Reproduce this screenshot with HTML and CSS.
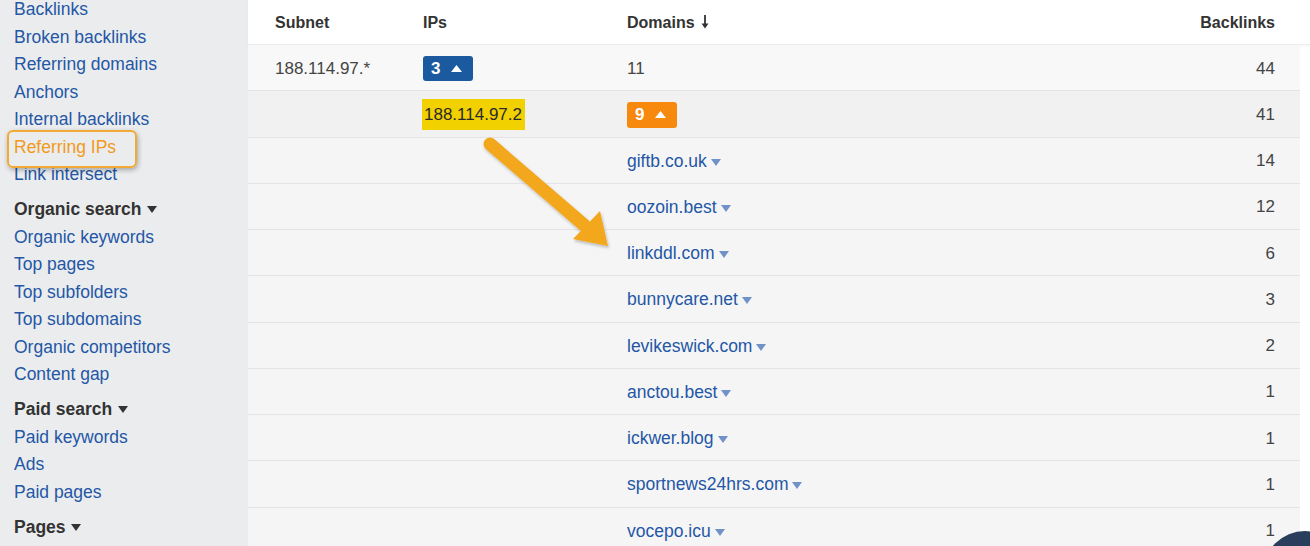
FILE: index.html
```html
<!DOCTYPE html>
<html lang="en">
<head>
  <meta charset="UTF-8">
  <title>Referring IPs</title>
  <link rel="stylesheet" href="styles.css">
</head>
<body>
  <div class="app">
    <nav class="sidebar">
      <ul class="nav">
        <li><a href="#">Backlinks</a></li>
        <li><a href="#">Broken backlinks</a></li>
        <li><a href="#">Referring domains</a></li>
        <li><a href="#">Anchors</a></li>
        <li><a href="#">Internal backlinks</a></li>
        <li class="active"><a href="#">Referring IPs</a></li>
        <li><a href="#">Link intersect</a></li>
        <li class="section">Organic search <svg class="caret dark" width="10" height="7" viewBox="0 0 10 7"><path d="M0 0h10L5 7z"/></svg></li>
        <li><a href="#">Organic keywords</a></li>
        <li><a href="#">Top pages</a></li>
        <li><a href="#">Top subfolders</a></li>
        <li><a href="#">Top subdomains</a></li>
        <li><a href="#">Organic competitors</a></li>
        <li><a href="#">Content gap</a></li>
        <li class="section">Paid search <svg class="caret dark" width="10" height="7" viewBox="0 0 10 7"><path d="M0 0h10L5 7z"/></svg></li>
        <li><a href="#">Paid keywords</a></li>
        <li><a href="#">Ads</a></li>
        <li><a href="#">Paid pages</a></li>
        <li class="section">Pages <svg class="caret dark" width="10" height="7" viewBox="0 0 10 7"><path d="M0 0h10L5 7z"/></svg></li>
      </ul>
    </nav>

    <main class="content">
      <div class="row head">
        <div>Subnet</div>
        <div>IPs</div>
        <div class="sorted">Domains
          <svg width="8" height="14" viewBox="0 0 8 14"><path d="M4 0v11" stroke="#333" stroke-width="1.8"/><path d="M0.5 8.5h7L4 13.5z" fill="#333"/></svg>
        </div>
        <div class="num">Backlinks</div>
      </div>

      <div class="row subnet">
        <div>188.114.97.*</div>
        <div><span class="badge blue">3 <svg width="11" height="7" viewBox="0 0 11 7"><path d="M0 7h11L5.5 0z" fill="#fff"/></svg></span></div>
        <div>11</div>
        <div class="num">44</div>
      </div>

      <div class="row ip">
        <div></div>
        <div><span class="mark">188.114.97.2</span></div>
        <div><span class="badge orange">9 <svg width="11" height="7" viewBox="0 0 11 7"><path d="M0 7h11L5.5 0z" fill="#fff"/></svg></span></div>
        <div class="num">41</div>
      </div>

      <div class="row"><div></div><div></div><div><a href="#">giftb.co.uk</a><svg class="caret" width="10" height="7" viewBox="0 0 10 7"><path d="M0 0h10L5 7z"/></svg></div><div class="num">14</div></div>
      <div class="row"><div></div><div></div><div><a href="#">oozoin.best</a><svg class="caret" width="10" height="7" viewBox="0 0 10 7"><path d="M0 0h10L5 7z"/></svg></div><div class="num">12</div></div>
      <div class="row"><div></div><div></div><div><a href="#">linkddl.com</a><svg class="caret" width="10" height="7" viewBox="0 0 10 7"><path d="M0 0h10L5 7z"/></svg></div><div class="num">6</div></div>
      <div class="row"><div></div><div></div><div><a href="#">bunnycare.net</a><svg class="caret" width="10" height="7" viewBox="0 0 10 7"><path d="M0 0h10L5 7z"/></svg></div><div class="num">3</div></div>
      <div class="row"><div></div><div></div><div><a href="#">levikeswick.com</a><svg class="caret" width="10" height="7" viewBox="0 0 10 7"><path d="M0 0h10L5 7z"/></svg></div><div class="num">2</div></div>
      <div class="row"><div></div><div></div><div><a href="#">anctou.best</a><svg class="caret" width="10" height="7" viewBox="0 0 10 7"><path d="M0 0h10L5 7z"/></svg></div><div class="num">1</div></div>
      <div class="row"><div></div><div></div><div><a href="#">ickwer.blog</a><svg class="caret" width="10" height="7" viewBox="0 0 10 7"><path d="M0 0h10L5 7z"/></svg></div><div class="num">1</div></div>
      <div class="row"><div></div><div></div><div><a href="#">sportnews24hrs.com</a><svg class="caret" width="10" height="7" viewBox="0 0 10 7"><path d="M0 0h10L5 7z"/></svg></div><div class="num">1</div></div>
      <div class="row"><div></div><div></div><div><a href="#">vocepo.icu</a><svg class="caret" width="10" height="7" viewBox="0 0 10 7"><path d="M0 0h10L5 7z"/></svg></div><div class="num">1</div></div>
    </main>
  </div>

  <!-- annotation arrow drawn over the table -->
  <svg class="callout" width="140" height="120" viewBox="470 130 140 120">
    <defs>
      <filter id="shade" x="-20%" y="-20%" width="140%" height="140%">
        <feDropShadow dx="1" dy="2" stdDeviation="1.5" flood-color="#000" flood-opacity="0.25"/>
      </filter>
    </defs>
    <g filter="url(#shade)" fill="#f2a71b">
      <path d="M490 144L584 225" stroke="#f2a71b" stroke-width="13" stroke-linecap="round"/>
      <path d="M573 239L608 246L600 211z"/>
    </g>
  </svg>

  <div class="chat-bubble"></div>
</body>
</html>
```

FILE: styles.css
```css
:root {
  --side-bg:   #ebecee;
  --link:      #2457a5;
  --active:    #f29a1c;
  --text:      #333;
  --cell:      #444;
  --row-bg:    #f5f5f6;
  --row-line:  #e4e4e6;
  --blue:      #1b5a9f;
  --orange:    #f7890f;
  --caret:     #7191c9;
}
html, body {
  margin: 0; padding: 0;
  height: 100%;
  overflow: hidden;
  background: #fff;
  font-family: "Liberation Sans", Arial, sans-serif;
  color: var(--text);
}
.app { display: flex; height: 100vh; }

/* sidebar */
.sidebar {
  width: 248px; flex: none;
  background: var(--side-bg);
  overflow: hidden;
}
.nav {
  list-style: none;
  margin: -4px 0 0; padding: 0 0 0 14px;
  font-size: 17.5px;
  line-height: 27.5px;
}
.nav a { color: var(--link); text-decoration: none; }
.nav li.section {
  margin-top: 7.5px;
  font-weight: bold;
  color: #333;
}
.nav .caret { margin-left: 1px; vertical-align: 2px; }
.nav .caret.dark { fill: #333; }
.nav li.active { position: relative; }
.nav li.active a { color: var(--active); }
.nav li.active::before {
  content: "";
  position: absolute;
  left: -7px; top: -4px;
  width: 126px; height: 34px;
  border: 2.5px solid #f0aa35;
  border-radius: 6px;
  box-shadow: 1px 2px 5px rgba(0,0,0,0.3);
}

/* table */
.content {
  flex: 1;
  padding-right: 10px;
  font-size: 17px;
  color: var(--cell);
}
.row {
  display: grid;
  grid-template-columns: 148px 204px 1fr auto;
  align-items: center;
  box-sizing: border-box;
  height: 46.25px;
  padding: 2px 25px 0 27px;
  background: var(--row-bg);
  border-bottom: 1px solid var(--row-line);
}
.row .num { text-align: right; }
.row.head {
  height: 45px;
  margin-right: -10px;
  padding-right: 35px;
  background: #fff;
  color: var(--text);
  font-size: 16px;
  font-weight: bold;
  border-bottom: 1px solid #ececee;
  box-shadow: 0 2px 3px rgba(0,0,0,0.03);
}
.row.head .sorted svg { margin-left: 2px; vertical-align: -1px; }
.row.subnet { background: #f8f8f9; }
.row.ip { background: #f1f1f2; }

.row a {
  color: var(--link);
  text-decoration: none;
  font-size: 17.5px;
}
.row .caret { fill: var(--caret); margin-left: 4px; vertical-align: 1px; }

.badge {
  display: inline-flex;
  align-items: center;
  gap: 11px;
  box-sizing: border-box;
  width: 50px; height: 25px;
  padding-left: 8px;
  border-radius: 3px;
  color: #fff;
  font-weight: bold;
  font-size: 17px;
}
.badge.blue { background: var(--blue); }
.badge.orange { background: var(--orange); height: 26px; }

.mark {
  display: inline-block;
  margin-left: -1px;
  padding: 0 3px 0 2px;
  line-height: 31px;
  background: #f2d100;
  color: #2a2a2a;
}

/* overlays */
.callout {
  position: absolute;
  left: 470px; top: 130px;
  overflow: visible;
}
.chat-bubble {
  position: absolute;
  left: 1263px; top: 531px;
  width: 84px; height: 84px;
  border-radius: 50%;
  background: #2b3d5c;
}
```
